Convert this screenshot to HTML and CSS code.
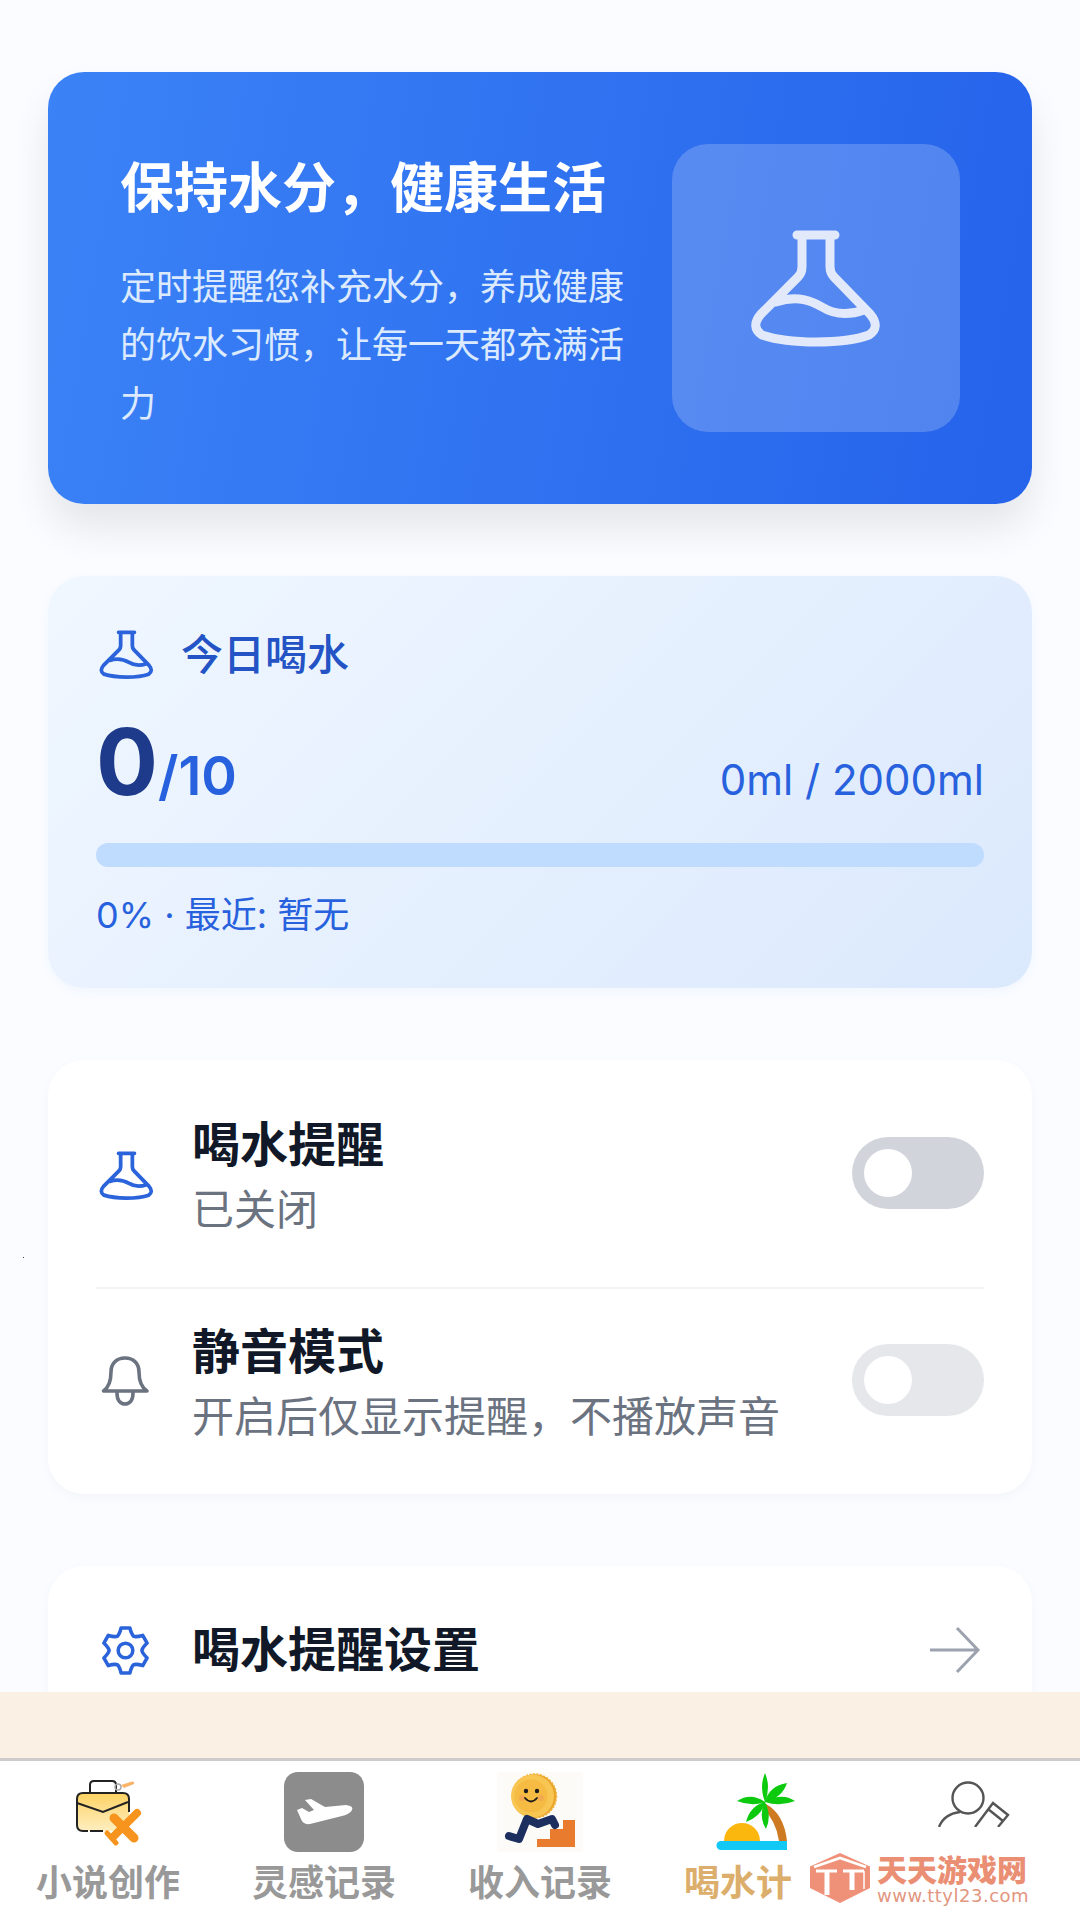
FILE: index.html
```html
<!DOCTYPE html>
<html lang="zh-CN">
<head>
<meta charset="utf-8">
<title>喝水计划</title>
<link rel="stylesheet" href="styles.css">
</head>
<body>
<svg class="defs" width="0" height="0" aria-hidden="true">
  <symbol id="flask" viewBox="28 26 136 122">
    <path d="M77 34H115M82 38V66Q82 72 78 76L41 113Q30 126 42 134Q62 141 96 141Q130 141 149 134Q161 126 150 113L114 76Q110 72 110 66V38M56 101C78 94 92 100 102 106C115 114 130 114 144 109" fill="none" stroke="currentColor" stroke-width="9" stroke-linecap="round" stroke-linejoin="round"/>
  </symbol>
</svg>
<div class="app">
  <main class="content">
    <section class="hero">
      <div class="hero-text">
        <h1 class="hero-title">保持水分，健康生活</h1>
        <p class="hero-desc">定时提醒您补充水分，养成健康的饮水习惯，让每一天都充满活力</p>
      </div>
      <div class="hero-tile">
        <svg class="flask-big"><use href="#flask"/></svg>
      </div>
    </section>

    <section class="stats">
      <div class="stats-head">
        <svg class="flask-small"><use href="#flask"/></svg>
        <span class="stats-title">今日喝水</span>
      </div>
      <div class="stats-nums">
        <div class="count"><span class="count-now">0</span><span class="count-goal">/10</span></div>
        <span class="volume">0ml / 2000ml</span>
      </div>
      <div class="track"></div>
      <div class="stats-foot">0% · 最近: 暂无</div>
    </section>

    <section class="card">
      <div class="row row-first">
        <svg class="flask-small"><use href="#flask"/></svg>
        <div class="row-text">
          <div class="row-title">喝水提醒</div>
          <div class="row-sub">已关闭</div>
        </div>
        <div class="toggle"><span class="knob"></span></div>
      </div>
      <div class="row row-last">
        <svg class="row-icon grey lifted" viewBox="7 10 59 59"><path d="M36 17C27 17 22 23 22 31C22 40 20 46 14.500 50H58C52 46 50 40 50 31C50 23 45 17 36 17ZM28 52C28 60 32 63 36 63C40 63 44 60 44 52" fill="none" stroke="currentColor" stroke-width="3.600" stroke-linejoin="round" stroke-linecap="round"/></svg>
        <div class="row-text">
          <div class="row-title">静音模式</div>
          <div class="row-sub">开启后仅显示提醒，不播放声音</div>
        </div>
        <div class="toggle toggle-light"><span class="knob"></span></div>
      </div>
    </section>

    <section class="card card-link">
      <div class="row">
        <svg class="row-icon blue" viewBox="-31.500 -31.500 63 63"><path d="M-4.700 -24H4.700Q6.500 -17 8.750 -15.200Q11.500 -14.100 18.400 -16.100L23.100 -7.900Q18 -2.900 17.500 0Q18 2.900 23.100 7.900L18.400 16.100Q11.500 14.100 8.750 15.200Q6.500 17 4.700 24H-4.700Q-6.500 17 -8.750 15.200Q-11.500 14.100 -18.400 16.100L-23.100 7.900Q-18 2.900 -17.500 0Q-18 -2.900 -23.100 -7.900L-18.400 -16.100Q-11.500 -14.100 -8.750 -15.200Q-6.500 -17 -4.700 -24Z" fill="none" stroke="currentColor" stroke-width="3.800" stroke-linejoin="round"/><circle r="7.800" fill="none" stroke="currentColor" stroke-width="3.800"/></svg>
        <div class="row-title">喝水提醒设置</div>
        <svg class="arrow" viewBox="0 0 54 54"><path d="M3 27H51M30 5L51 27L30 49" fill="none" stroke="currentColor" stroke-width="3"/></svg>
      </div>
    </section>
  </main>

  <div class="band"></div>

  <nav class="tabs">
    <div class="tab">
      <svg class="tab-icon" viewBox="0 0 80 80">
        <defs><linearGradient id="case" x1="0" y1="0" x2="0" y2="1"><stop offset="0" stop-color="#fdd25f"/><stop offset=".35" stop-color="#fddc85"/><stop offset="1" stop-color="#feeebf"/></linearGradient></defs>
        <path d="M22 21V13Q22 9 26 9H44Q48 9 48 13V21" fill="none" stroke="#222" stroke-width="2"/>
        <circle cx="50" cy="15" r="3" fill="none" stroke="#aaa" stroke-width="1.500"/>
        <path d="M53 13L64 9.500Q67 9.500 66 12L56 16Z" fill="#fbb36a"/>
        <rect x="9" y="21" width="52" height="38" rx="6" fill="url(#case)"/>
        <path d="M20 59H15Q9 59 9 53V27Q9 21 15 21H55Q61 21 61 27V40" fill="none" stroke="#222" stroke-width="2"/>
        <path d="M9 31L35 40L60 30" fill="none" stroke="#222" stroke-width="2"/>
        <path d="M22 59H35" stroke="#222" stroke-width="2"/>
        <path d="M46 46L66 66" fill="none" stroke="#f7941d" stroke-width="9" stroke-linecap="round"/>
        <path d="M69 41L45 65" fill="none" stroke="#f7941d" stroke-width="8" stroke-linecap="round"/>
        <path d="M39 61L48 71" fill="none" stroke="#f7941d" stroke-width="5" stroke-linecap="round"/>
      </svg>
      <div class="tab-label">小说创作</div>
    </div>
    <div class="tab">
      <svg class="tab-icon" viewBox="0 0 80 80">
        <rect width="80" height="80" rx="14" fill="#8c8c8c"/>
        <path d="M21 28L27 27L41 35L62 33Q70 34 68 38Q66 42 58 44L26 52Q19 53 17 47L13 38L18 36L25 40L30 38Z" fill="#fff"/>
      </svg>
      <div class="tab-label">灵感记录</div>
    </div>
    <div class="tab">
      <svg class="tab-icon" viewBox="0 0 80 80">
        <rect x="-3" width="86" height="80" fill="#fdfbf8"/>
        <circle cx="34.500" cy="24" r="22" fill="#e9a42c" stroke="#f2b43c" stroke-width="1.500" stroke-dasharray="2 1.500"/>
        <circle cx="32.500" cy="24" r="21.500" fill="#f8c653"/>
        <circle cx="31" cy="24" r="16.500" fill="#f5bb42"/>
        <circle cx="22" cy="26" r="3" fill="#f4a950"/>
        <circle cx="41" cy="26" r="3" fill="#f4a950"/>
        <circle cx="26" cy="19" r="2.200" fill="#1b1b1b"/>
        <circle cx="37" cy="19" r="2.200" fill="#1b1b1b"/>
        <path d="M25 26Q31 33 37 26" fill="none" stroke="#1b1b1b" stroke-width="1.800" stroke-linecap="round"/>
        <path d="M37 67H50V57H63V48H75V75H37Z" fill="#e97b2e"/>
        <path d="M9 64L19 67L27 47L38 52L52 47L55 53" fill="none" stroke="#1c2f5e" stroke-width="8" stroke-linejoin="round" stroke-linecap="round"/>
      </svg>
      <div class="tab-label">收入记录</div>
    </div>
    <div class="tab">
      <svg class="tab-icon" viewBox="0 0 80 80">
        <path d="M8 69A18 18 0 0 1 44 69Z" fill="#fcb70e"/>
        <path d="M50 32Q68 42 71 69H63Q60 48 46 36Z" fill="#cd7a22"/>
        <path d="M5 69H71V78H5A4.500 4.500 0 0 1 5 69Z" fill="#12c8f5"/>
        <path d="M49 30Q43 15 49 1Q55 15 49 30ZM49 30Q53 14 71 11Q66 26 49 30ZM49 30Q66 20 79 29Q64 35 49 30ZM49 30Q35 20 21 29Q36 35 49 30ZM49 30Q34 34 30 50Q46 44 49 30ZM49 30Q42 44 50 57Q56 44 49 30Z" fill="#0dca0f"/>
      </svg>
      <div class="tab-label tab-label-active">喝水计</div>
    </div>
    <div class="tab">
      <svg class="tab-icon" viewBox="0 0 80 80">
        <circle cx="36" cy="26" r="15.500" fill="none" stroke="#555" stroke-width="2.400"/>
        <path d="M7 55Q12 42 28 40M43 55L61 31L76 43L66 55M56 37L71 49" fill="none" stroke="#555" stroke-width="2.400"/>
      </svg>
    </div>
  </nav>

  <aside class="watermark">
    <svg class="wm-logo" viewBox="0 0 60 50">
      <path d="M30 0L60 13.500V35L30 50L0 35V13.500Z" fill="#ee9178"/>
      <path d="M4 14L30 5L56 14M6 18H27M33 18H54" fill="none" stroke="#fff" stroke-width="2.800"/>
      <path d="M17 18V42M42 18V37" fill="none" stroke="#fff" stroke-width="5"/>
      <path d="M54 18V36" fill="none" stroke="#fff" stroke-width="1.500"/>
    </svg>
    <div class="wm-text">
      <div class="wm-name">天天游戏网</div>
      <div class="wm-url">www.ttyl23.com</div>
    </div>
  </aside>
  <span class="speck"></span>
</div>
</body>
</html>
```
FILE: styles.css
```css
* { box-sizing: border-box; }
html, body { margin: 0; padding: 0; }
body {
  width: 1080px;
  height: 1920px;
  overflow: hidden;
  font-family: Inter, "Noto Sans CJK SC", sans-serif;
  background: #fafcff;
}
.defs { position: absolute; }
.app {
  position: relative;
  width: 1080px;
  height: 1920px;
  display: flex;
  flex-direction: column;
}
.content {
  height: 1692px;
  flex: none;
  overflow: hidden;
  padding: 72px 48px 0;
  display: flex;
  flex-direction: column;
  gap: 72px;
}
.hero {
  flex: none;
  display: flex;
  align-items: center;
  justify-content: space-between;
  padding: 72px;
  height: 432px;
  border-radius: 36px;
  background: linear-gradient(100deg, #3b82f6 0%, #2563eb 100%);
  box-shadow: 0 24px 40px rgba(0, 0, 0, .09);
  color: #fff;
}
.hero-text { width: 510px; }
.hero-title {
  margin: 0 0 31px;
  font-size: 54px;
  line-height: 78px;
  font-weight: 700;
  font-family: "Noto Sans CJK SC", sans-serif;
}
.hero-desc {
  margin: 0;
  font-size: 36px;
  line-height: 58.5px;
  color: #dbeafe;
  font-family: "Noto Sans CJK SC", sans-serif;
}
.hero-tile {
  width: 288px;
  height: 288px;
  flex: none;
  border-radius: 36px;
  background: rgba(255, 255, 255, .2);
  display: flex;
  align-items: center;
  justify-content: center;
  color: #e1e9fb;
}
.flask-big { width: 136px; height: 122px; }
.flask-small { width: 57px; height: 51px; margin-left: 2px; color: #2b63da; flex: none; }

.stats {
  flex: none;
  height: 412px;
  padding: 48px;
  border-radius: 36px;
  background: linear-gradient(135deg, #f0f7ff 0%, #dbe9fd 100%);
  box-shadow: 0 4px 12px rgba(37, 99, 235, .04);
}
.stats-head {
  display: flex;
  align-items: center;
  gap: 26px;
  height: 60px;
}
.stats-title {
  font-size: 42px;
  line-height: 56px;
  margin-bottom: 4px;
  font-weight: 500;
  color: #2353c4;
  font-family: "Noto Sans CJK SC", sans-serif;
}
.stats-nums {
  display: flex;
  justify-content: space-between;
  align-items: baseline;
  margin-top: 19px;
  height: 118px;
  line-height: 118px;
}
.count-now {
  font-size: 92px;
  font-weight: 700;
  color: #1e3a8a;
}
.count-goal {
  font-size: 54px;
  font-weight: 600;
  color: #2861dd;
}
.volume {
  font-size: 42px;
  color: #2861dd;
}
.track {
  margin-top: 22px;
  height: 24px;
  border-radius: 12px;
  background: #bfdbfe;
}
.stats-foot {
  margin-top: 24px;
  font-size: 36px;
  line-height: 48px;
  color: #2861dd;
}

.card {
  flex: none;
  padding: 0 48px;
  border-radius: 36px;
  background: #fff;
  box-shadow: 0 4px 12px rgba(0, 0, 0, .03);
}
.row {
  display: flex;
  align-items: center;
}
.row-first {
  padding: 49px 0 46px;
  border-bottom: 2px solid #f3f4f6;
}
.row-last { padding: 27px 0 46px; }
.row-text { flex: 1; margin-left: 37px; }
.row-title {
  font-size: 48px;
  line-height: 72px;
  font-weight: 600;
  color: #111827;
}
.row-sub {
  font-size: 42px;
  line-height: 58px;
  margin-bottom: 2px;
  color: #6b7280;
}
.row-icon { width: 59px; height: 59px; flex: none; }
.lifted { margin-bottom: 4px; }
.grey { color: #6b7280; }
.blue { color: #2b63da; }
.toggle {
  width: 132px;
  height: 72px;
  flex: none;
  margin-bottom: 4px;
  padding: 12px;
  border-radius: 36px;
  background: #d1d5db;
}
.toggle-light { background: #e5e7eb; }
.knob {
  display: block;
  width: 48px;
  height: 48px;
  border-radius: 50%;
  background: #fff;
}
.card-link { padding: 48px; height: 240px; }
.card-link .row-title { flex: 1; margin-left: 37px; }
.arrow { width: 54px; height: 54px; margin-right: 3px; color: #9ca3af; flex: none; }

.band {
  flex: none;
  height: 66px;
  background: #fbf0e4;
}
.tabs {
  flex: 1;
  display: flex;
  padding-top: 11px;
  border-top: 3px solid #cfcacb;
  background: #fff;
}
.tab {
  width: 216px;
  display: flex;
  flex-direction: column;
  align-items: center;
}
.tab-icon { width: 80px; height: 80px; flex: none; overflow: visible; }
.tab-label {
  width: 144px;
  margin-top: 3px;
  font-size: 36px;
  line-height: 50px;
  font-weight: 700;
  color: #999;
  white-space: nowrap;
  font-family: "Noto Sans CJK SC", sans-serif;
}
.tab-label-active { color: #dcae6c; }

.watermark {
  position: absolute;
  left: 800px;
  top: 1827px;
  width: 280px;
  height: 93px;
  padding: 26px 0 0 10px;
  display: flex;
  gap: 7px;
  background: #fff;
}
.wm-logo { width: 60px; height: 50px; flex: none; }
.wm-name {
  font-size: 30px;
  line-height: 30px;
  font-weight: 900;
  color: #ea8f74;
  font-family: "Noto Sans CJK SC", sans-serif;
}
.wm-url {
  margin-top: 3px;
  font-size: 18px;
  line-height: 20px;
  letter-spacing: .5px;
  color: #e2967f;
  font-family: "DejaVu Sans", sans-serif;
}
.speck {
  position: absolute;
  left: 23px;
  top: 1257px;
  width: 1px;
  height: 1px;
  background: #444;
}
```
